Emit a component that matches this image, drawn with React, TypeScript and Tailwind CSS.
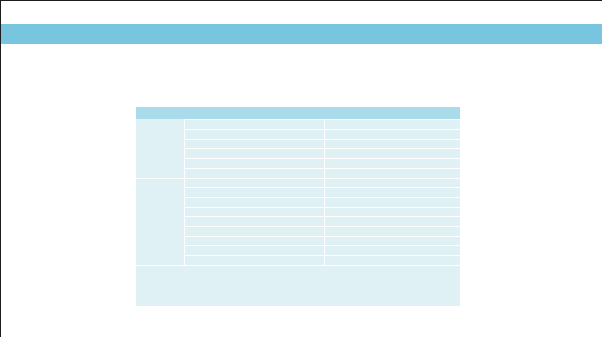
import React from "react";

const group1 = ["h-[10px]", "h-[10px]", "h-[9px]", "h-[10px]", "h-[10px]", "h-[10px]"];
const group2 = ["h-[8px]", "h-[10px]", "h-[10px]", "h-[9px]", "h-[10px]", "h-[10px]", "h-[9px]", "h-[10px]", "h-[10px]"];

const Group = ({ rows, first }: { rows: string[]; first?: boolean }) => (
  <div className={`flex ${first ? "" : "border-t border-white"}`}>
    <div className="w-[49px] border-r border-white" />
    <div className="flex flex-1 flex-col">
      {rows.map((h, i) => (
        <div key={i} className={`flex ${h} ${i === 0 && !first ? "" : "border-t border-white"}`}>
          <div className="w-[140px] border-r border-white" />
          <div className="flex-1" />
        </div>
      ))}
    </div>
  </div>
);

export default function App() {
  return (
    <div className="h-[337px] w-[602px] border-t border-l border-[#1c1c1c] bg-white font-['Liberation_Sans',sans-serif]">
      <div className="mt-[23px] h-[20px] bg-[#77c5de]" />
      <div className="mt-[63px] ml-[135px] w-[324px] bg-[#e0f1f6]">
        <div className="h-[12px] bg-[#a9dbea]" />
        <Group rows={group1} first />
        <Group rows={group2} />
        <div className="h-[41px] border-t border-white" />
      </div>
    </div>
  );
}
